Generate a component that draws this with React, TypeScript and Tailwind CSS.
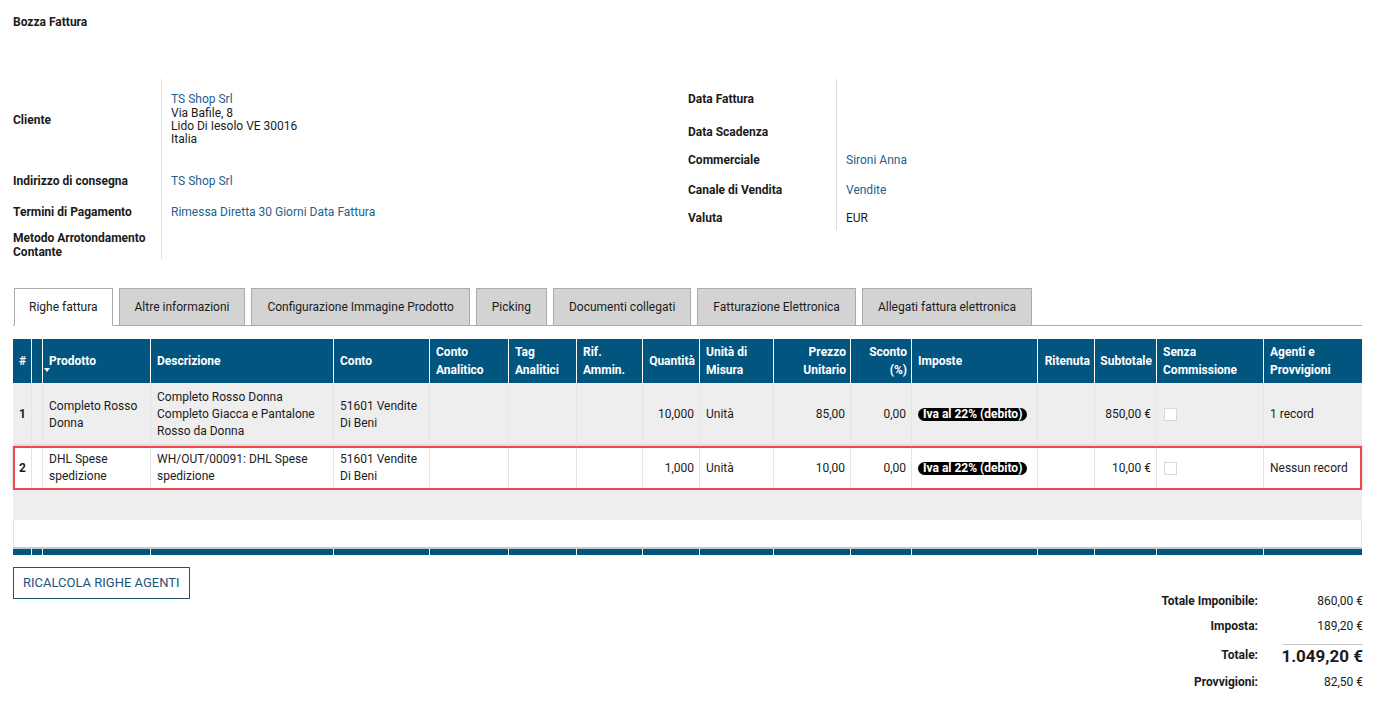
const cols = [
    { label: '#', right: false },
    { label: '', right: false },
    { label: 'Prodotto', right: false },
    { label: 'Descrizione', right: false },
    { label: 'Conto', right: false },
    { label: 'Conto\nAnalitico', right: false },
    { label: 'Tag\nAnalitici', right: false },
    { label: 'Rif.\nAmmin.', right: false },
    { label: 'Quantità', right: true },
    { label: 'Unità di\nMisura', right: false },
    { label: 'Prezzo\nUnitario', right: true },
    { label: 'Sconto\n(%)', right: true },
    { label: 'Imposte', right: false },
    { label: 'Ritenuta', right: true },
    { label: 'Subtotale', right: true },
    { label: 'Senza\nCommissione', right: false },
    { label: 'Agenti e\nProvvigioni', right: false },
];

const gridCols =
    'grid grid-cols-[18px_11px_108px_183px_96px_79px_68px_66px_57px_74px_77px_61px_126px_57px_62px_107px_99px]';

const rows = [
    {
        n: '1',
        prodotto: 'Completo Rosso\nDonna',
        descr: 'Completo Rosso Donna\nCompleto Giacca e Pantalone\nRosso da Donna',
        conto: '51601 Vendite\nDi Beni',
        qty: '10,000',
        um: 'Unità',
        prezzo: '85,00',
        sconto: '0,00',
        sub: '850,00 €',
        agenti: '1 record',
    },
    {
        n: '2',
        prodotto: 'DHL Spese\nspedizione',
        descr: 'WH/OUT/00091: DHL Spese\nspedizione',
        conto: '51601 Vendite\nDi Beni',
        qty: '1,000',
        um: 'Unità',
        prezzo: '10,00',
        sconto: '0,00',
        sub: '10,00 €',
        agenti: 'Nessun record',
    },
];

const tabs = [
    'Righe fattura',
    'Altre informazioni',
    'Configurazione Immagine Prodotto',
    'Picking',
    'Documenti collegati',
    'Fatturazione Elettronica',
    'Allegati fattura elettronica',
];

const Link = ({ children }: { children: React.ReactNode }) => (
    <span className="text-[#245f8f]">{children}</span>
);

const Badge = () => (
    <span className="inline-block rounded-full bg-black px-[5px] text-[12px] font-bold leading-[13px] text-white">
        Iva al 22% (debito)
    </span>
);

const Checkbox = () => <span className="inline-block h-[13px] w-[13px] border border-[#d9d9d9] bg-white" />;

function BodyRow({ r, selected }: { r: (typeof rows)[number]; selected: boolean }) {
    const cells: React.ReactNode[] = [
        <span className="font-bold">{r.n}</span>,
        '',
        r.prodotto,
        r.descr,
        r.conto,
        '',
        '',
        '',
        r.qty,
        r.um,
        r.prezzo,
        r.sconto,
        <Badge />,
        '',
        r.sub,
        <Checkbox />,
        r.agenti,
    ];
    return (
        <div
            className={`${gridCols} ${
                selected
                    ? 'h-[44px] bg-white outline-2 -outline-offset-2 outline-[#f0474c] shadow-[0_0_3px_rgba(0,0,0,0.25)]'
                    : 'h-[63px] bg-[#eeeeee]'
            }`}
        >
            {cells.map((c, i) => (
                <div
                    key={i}
                    className={`flex items-center whitespace-pre-line leading-[17px] ${
                        i > 0 ? 'border-l border-[#e4e4e4]' : ''
                    } ${cols[i].right ? 'justify-end pl-[4px] pr-[5px] text-right' : 'pl-[6px] pr-[2px]'} ${
                        i === 15 ? 'pl-[7px]' : ''
                    }`}
                >
                    {c}
                </div>
            ))}
        </div>
    );
}

export default function App() {
    return (
        <div className="min-h-[702px] bg-white pl-[13px] pr-[14px] font-['Roboto',sans-serif] text-[12px] text-[#1b1b1b]">
            <div className="pt-[15px] text-[12px] font-bold leading-[14px]">Bozza Fattura</div>

            {/* intestazione */}
            <div className="mt-[50px] flex">
                <div className="w-[675px]">
                    <div className="flex h-[82px]">
                        <div className="flex w-[149px] items-center border-r border-[#dcdcdc] font-bold">Cliente</div>
                        <div className="flex items-center pl-[9px] leading-[13.4px]">
                            <div>
                                <Link>TS Shop Srl</Link>
                                <div>Via Bafile, 8</div>
                                <div>Lido Di Iesolo VE 30016</div>
                                <div>Italia</div>
                            </div>
                        </div>
                    </div>
                    <div className="flex h-[40px]">
                        <div className="flex w-[149px] items-center border-r border-[#dcdcdc] font-bold">
                            Indirizzo di consegna
                        </div>
                        <div className="flex items-center pl-[9px]">
                            <Link>TS Shop Srl</Link>
                        </div>
                    </div>
                    <div className="flex h-[21px]">
                        <div className="flex w-[149px] items-center border-r border-[#dcdcdc] font-bold">
                            Termini di Pagamento
                        </div>
                        <div className="flex items-center pl-[9px]">
                            <Link>Rimessa Diretta 30 Giorni Data Fattura</Link>
                        </div>
                    </div>
                    <div className="flex h-[37px]">
                        <div className="flex w-[149px] items-end border-r border-[#dcdcdc] font-bold leading-[14px]">
                            Metodo Arrotondamento Contante
                        </div>
                        <div className="pl-[9px]" />
                    </div>
                </div>
                <div>
                    {[
                        { l: 'Data Fattura', v: null, h: 'h-[39px]' },
                        { l: 'Data Scadenza', v: null, h: 'h-[28px]' },
                        { l: 'Commerciale', v: <Link>Sironi Anna</Link>, h: 'h-[28px]' },
                        { l: 'Canale di Vendita', v: <Link>Vendite</Link>, h: 'h-[32px]' },
                        { l: 'Valuta', v: 'EUR', h: 'h-[24px]' },
                    ].map((f) => (
                        <div key={f.l} className={`flex ${f.h}`}>
                            <div className="flex w-[149px] items-center border-r border-[#dcdcdc] font-bold">{f.l}</div>
                            <div className="flex items-center pl-[9px]">{f.v}</div>
                        </div>
                    ))}
                </div>
            </div>

            {/* tabs */}
            <div className="mt-[29px] flex h-[38px] items-end gap-[6px] border-b border-[#ababab] pl-px">
                {tabs.map((t, i) => (
                    <div
                        key={t}
                        className={`-mb-px flex h-[38px] items-center border border-[#ababab] ${
                            i === 0 ? 'border-b-white bg-white px-[14px]' : 'bg-[#d3d3d3] px-[15px]'
                        }`}
                    >
                        {t}
                    </div>
                ))}
            </div>

            {/* tabella righe */}
            <div className="mt-[13px]">
                <div className={`${gridCols} h-[44px] bg-[#01557f] font-bold leading-[18px] text-white`}>
                    {cols.map((c, i) => (
                        <div
                            key={i}
                            className={`relative flex items-center whitespace-pre ${i > 0 ? 'border-l border-white' : ''} ${
                                c.right ? 'justify-end pl-[3px] pr-[4px] text-right' : 'pl-[6px]'
                            }`}
                        >
                            {c.label}
                            {i === 2 && (
                                <span className="absolute left-[1px] top-[29px] h-0 w-0 border-x-[3px] border-t-[4px] border-x-transparent border-t-white" />
                            )}
                        </div>
                    ))}
                </div>
                {rows.map((r, i) => (
                    <BodyRow key={r.n} r={r} selected={i === 1} />
                ))}
                <div className="h-[30px] bg-[#eeeeee]" />
                <div className="h-[27px] border-x border-[#e2e2e2] bg-white" />
                <div className="h-[2px] bg-[#c8c8c8]" />
                <div className={`${gridCols} h-[6px] bg-[#01557f]`}>
                    {cols.map((_, i) => (
                        <div key={i} className={i > 0 ? 'border-l border-white' : ''} />
                    ))}
                </div>
            </div>

            {/* pulsante + totali */}
            <div className="mt-[12px] flex items-start justify-between">
                <button className="h-[32px] border border-[#1e5377] bg-white px-[9px] text-[13px] text-[#1e5377]">
                    RICALCOLA RIGHE AGENTI
                </button>
                <div className="-mr-px mt-[22px]">
                    <div className="flex h-[24px] items-center">
                        <div className="w-[200px] text-right font-bold">Totale Imponibile:</div>
                        <div className="w-[105px] text-right">860,00 €</div>
                    </div>
                    <div className="flex h-[26px] items-center">
                        <div className="w-[200px] text-right font-bold">Imposta:</div>
                        <div className="w-[105px] text-right">189,20 €</div>
                    </div>
                    <div className="flex h-[32px] items-center">
                        <div className="w-[200px] text-right font-bold">Totale:</div>
                        <div className="flex w-[105px] justify-end">
                            <div className="flex h-[22px] w-[80px] items-center justify-end whitespace-nowrap border-t border-[#c8c8c8] pt-[2px] text-[17px] font-bold">
                                1.049,20 €
                            </div>
                        </div>
                    </div>
                    <div className="flex h-[22px] items-center">
                        <div className="w-[200px] text-right font-bold">Provvigioni:</div>
                        <div className="w-[105px] text-right">82,50 €</div>
                    </div>
                </div>
            </div>
        </div>
    );
}
